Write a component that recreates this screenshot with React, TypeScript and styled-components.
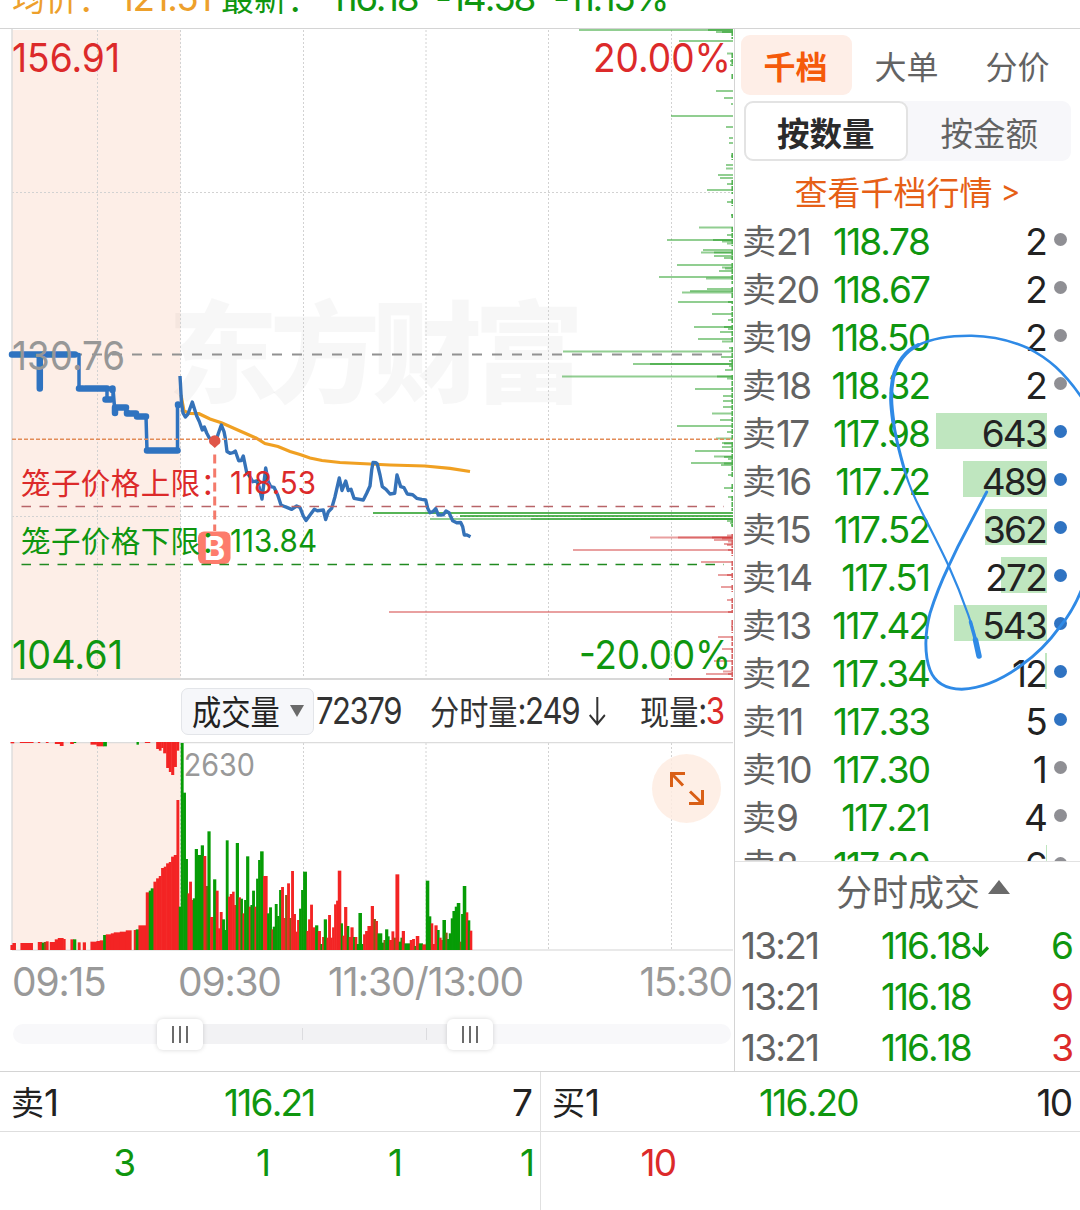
import React from "react";
import styled, { createGlobalStyle } from "styled-components";

const GREEN = "#0f960f";
const RED = "#dc2a2a";
const GREY = "#636363";
const FONT = '"Inter", "Noto Sans CJK SC", sans-serif';
const LINE = "#d4d4d4";

const GlobalStyle = createGlobalStyle`
  * { box-sizing: border-box; }
  body { margin: 0; background: #fff; }
`;

const Page = styled.div`
  position: relative;
  width: 1080px;
  height: 1210px;
  overflow: hidden;
  display: flex;
  flex-direction: column;
  background: #fff;
  font-family: ${FONT};
  color: #222;
  white-space: nowrap;
`;

const Num = styled.span<{ $color?: string; $size?: number; $track?: number }>`
  display: inline-block;
  font-family: ${FONT};
  font-size: ${(p) => p.$size ?? 37}px;
  font-kerning: none;
  line-height: 1.1;
  letter-spacing: ${(p) => p.$track ?? -1.8}px;
  margin-right: ${(p) => -(p.$track ?? -1.8)}px;
  color: ${(p) => p.$color ?? "inherit"};
`;

const Han = styled.span<{ $size?: number; $color?: string }>`
  font-family: "Noto Sans CJK SC", sans-serif;
  font-size: ${(p) => p.$size ?? 33}px;
  line-height: 1.1;
  color: ${(p) => p.$color ?? "inherit"};
`;

/* top summary */
const Summary = styled.header`
  flex: none;
  height: 29px;
  border-bottom: 1px solid ${LINE};
  overflow: hidden;
`;
const SummaryLine = styled.div`
  display: grid;
  grid-template-columns: 107px 102px 109px 105px 118px auto;
  align-items: baseline;
  padding-left: 12px;
  margin-top: -22px;
  height: 40px;
`;

const Main = styled.main`
  flex: none;
  height: 1042px;
  display: grid;
  grid-template-columns: 734px 346px;
`;
const Charts = styled.section`
  display: flex;
  flex-direction: column;
`;
const PriceSvg = styled.svg`
  display: block;
  flex: none;
  width: 734px;
  height: 652px;
`;
const VolumeHead = styled.div`
  flex: none;
  height: 61px;
  padding-left: 181px;
  display: grid;
  grid-template-columns: 135px 114px 210px 1fr;
  align-items: center;
  color: #333;
`;
const Picker = styled.button`
  width: 133px;
  height: 47px;
  padding: 0 9px 2px 10px;
  display: flex;
  align-items: center;
  justify-content: space-between;
  border: 1px solid #e3e5e9;
  border-radius: 7px;
  background: #f6f7fa;
  color: #222;
`;
const PickerText = styled.span`
  width: 88px;
  font: 34px/1.1 "Noto Sans CJK SC", sans-serif;
  transform: scaleX(0.86);
  transform-origin: left;
`;
const Caret = styled.i<{ $up?: boolean }>`
  width: 0;
  height: 0;
  border-left: ${(p) => (p.$up ? 11 : 7.5)}px solid transparent;
  border-right: ${(p) => (p.$up ? 11 : 7.5)}px solid transparent;
  ${(p) => (p.$up ? "border-bottom: 14px solid #6a6a6a; margin-bottom: 7px;" : "border-top: 12px solid #6a6a6a;")}
`;
const Squeezed = styled.span<{ $by: number }>`
  display: flex;
  align-items: center;
  width: 0;
  transform: scaleX(${(p) => p.$by});
  transform-origin: left;
  ${Num} { margin-right: 0; }
  ${Han} { margin-top: -2px; }
  svg { flex: none; margin-left: 12px; }
`;
const VolumeBox = styled.div`
  position: relative;
  flex: none;
  height: 209px;
`;
const VolumeSvg = styled.svg`
  display: block;
  width: 734px;
  height: 209px;
`;
const Expand = styled.button`
  position: absolute;
  left: 652px;
  top: 12px;
  width: 69px;
  height: 69px;
  padding: 0;
  border: 0;
  border-radius: 50%;
  background: rgba(254, 236, 226, 0.85);
  svg { display: block; }
`;
const TimeAxis = styled.div`
  flex: none;
  height: 61px;
  padding: 2px 1px 0 12px;
  display: grid;
  grid-template-columns: 166px 150px 1fr auto;
  align-items: center;
  color: #999;
`;
const Track = styled.div`
  flex: none;
  height: 20px;
  margin: 12px 3px 0 13px;
  display: flex;
  align-items: center;
  border-radius: 10px;
  background: #f8f8fa;
`;
const Outside = styled.span`
  width: 167px;
`;
const Selected = styled.span`
  width: 290px;
  height: 20px;
  display: flex;
  justify-content: space-between;
  align-items: center;
  padding: 0 43px 0 122px;
  background: #f2f2f4;
`;
const Tick = styled.i`
  width: 1px;
  height: 12px;
  background: #dcdcdf;
`;
const Handle = styled.span`
  flex: none;
  z-index: 1;
  width: 46px;
  height: 31px;
  margin: 0 -23px;
  display: flex;
  justify-content: center;
  align-items: center;
  gap: 5px;
  border-radius: 6px;
  background: #fff;
  box-shadow: 0 0 5px rgba(0, 0, 0, 0.16);
`;
const Grip = styled.i`
  width: 2px;
  height: 17px;
  background: #6b6b6b;
`;

/* order book column */
const Book = styled.aside`
  height: 1042px;
  overflow: hidden;
  border-left: 1px solid ${LINE};
  display: flex;
  flex-direction: column;
`;
const Tabs = styled.nav`
  flex: none;
  height: 66px;
  margin-top: 6px;
  padding-left: 6px;
  display: grid;
  grid-template-columns: 111px 111px 111px;
`;
const Tab = styled.button<{ $on?: boolean }>`
  height: 60px;
  padding: 0 2px 0 0;
  border: 0;
  border-radius: 9px;
  background: ${(p) => (p.$on ? "#feeee7" : "none")};
  color: ${(p) => (p.$on ? "#f55a0a" : GREY)};
  font: ${(p) => (p.$on ? 700 : 400)} 32px/1 "Noto Sans CJK SC", sans-serif;
`;
const Segments = styled.div`
  flex: none;
  height: 60px;
  margin: 0 9px 0 9px;
  display: grid;
  grid-template-columns: 1fr 1fr;
  border-radius: 9px;
  background: #f7f7fa;
`;
const Segment = styled.button<{ $on?: boolean }>`
  padding: 2px 0 0;
  border: ${(p) => (p.$on ? "2px solid #e3e3e3" : "2px solid transparent")};
  border-radius: 9px;
  background: ${(p) => (p.$on ? "#fff" : "none")};
  color: ${(p) => (p.$on ? "#2b2b2b" : GREY)};
  font: ${(p) => (p.$on ? 700 : 400)} 32.5px/1 "Noto Sans CJK SC", sans-serif;
`;
const MoreLink = styled.a`
  flex: none;
  height: 57px;
  padding: 3px 0 0 0;
  display: flex;
  justify-content: center;
  align-items: center;
  gap: 8px;
  color: #e65f16;
`;
const Levels = styled.div`
  flex: none;
  height: 644px;
  overflow: hidden;
  border-bottom: 1px solid #e2e2e2;
`;
const Level = styled.div`
  height: 48px;
  padding: 0 13px 0 7px;
  display: grid;
  grid-template-columns: 86px 103px 116px 1fr;
  align-items: center;
`;
const Name = styled.span<{ $color?: string }>`
  display: flex;
  align-items: center;
  color: ${(p) => p.$color ?? GREY};
  ${Han} { margin-top: -4px; }
`;
const Right = styled.span`
  text-align: right;
`;
const Qty = styled.span<{ $bar: number }>`
  height: 36px;
  margin-bottom: 6px;
  padding-top: 6px;
  display: flex;
  justify-content: flex-end;
  align-items: center;
  background: linear-gradient(#bfe6bf, #bfe6bf) right / ${(p) => p.$bar}px 100% no-repeat;
  ${Num} { margin-right: 1px; }
`;
const Dot = styled.i<{ $live?: boolean }>`
  width: 13px;
  height: 13px;
  margin: 0 0 5px 7px;
  border-radius: 50%;
  background: ${(p) => (p.$live ? "#2f73c2" : "#8f8f94")};
`;
const TradesTitle = styled.div`
  flex: none;
  height: 59px;
  display: flex;
  align-items: center;
  justify-content: center;
  gap: 8px;
  padding: 0 0 2px 31px;
  color: ${GREY};
`;
const Trade = styled.div`
  flex: none;
  height: 51px;
  padding: 0 6px 0 6px;
  display: grid;
  grid-template-columns: 140px 1fr auto;
  align-items: center;
`;
const Price = styled.span`
  display: flex;
  align-items: center;
  svg { margin: -3px 0 0 -1px; }
`;

/* best bid / ask */
const Bottom = styled.footer`
  flex: 1;
  display: grid;
  grid-template-columns: 540px 540px;
  border-top: 1px solid ${LINE};
`;
const Side = styled.section`
  & + & { border-left: 1px solid #e0e0e0; }
`;
const Best = styled.div<{ $mid: number }>`
  height: 60px;
  padding: 3px 7px 0 11px;
  display: grid;
  grid-template-columns: ${(p) => p.$mid}px 1fr auto;
  align-items: center;
  border-bottom: 1px solid #dedede;
`;
const Orders = styled.div<{ $color: string }>`
  height: 61px;
  padding-top: 2px;
  display: grid;
  grid-template-columns: 136px 135px 132px 132px;
  align-items: center;
  text-align: right;
  color: ${(p) => p.$color};
`;
const Ink = styled.svg`
  position: absolute;
  left: 0;
  top: 0;
  pointer-events: none;
`;

type Bar = [number, number, number, string];

const parse = (text: string, shift = 0): Bar[] =>
  text.trim().split(/\s+/).map((item) => {
    const [, c, a, b, t] = item.match(/([a-z])(\d+)-(\d+):(\d+)/)!;
    return [Number(a) + shift, Number(b) + shift, Number(t), c];
  });

const FILL: Record<string, string> = { r: "#f32424", g: "#069c06", b: "#8a5a14" };

/* thirds of a pixel: colour, left-right : top */
const volume: Bar[] = [
  ...parse(`r32-38:915 r38-47:909 r62-98:909 r114-126:906 g126-132:908 b132-138:906 r138-145:904 r150-165:906 r165-174:898 r174-190:894 r190-196:897
  r212-220:898 g220-228:898 r234-241:907 r249-257:907 r272-290:905 r290-300:903 r300-310:901 g310-318:885 r318-333:883 r333-342:880 r342-360:877
  r360-378:875 r378-394:871 r402-408:870 g408-416:868 r416-438:856 r438-447:757 g447-453:752 g453-461:745 r461-469:725 r469-477:715
  r477-484:708 r484-492:684 r492-499:680 r499-507:670 r507-514:666 r514-522:650 r522-530:645 r530-537:480 g537-543:800 g543-550:309
  g550-557:458 g557-563:657 r563-568:760 r568-575:725 r575-579:780 g579-585:775 g585-593:627 g593-603:645 g603-611:616 r611-618:648
  b618-623:738 g623-631:574 r631-640:831 g640-648:718 r648-655:752 r655-660:865 r660-667:816 g667-674:838 g674-678:870 g678-685:601
  r685-690:770 r690-697:762 r697-703:755 r703-708:795 g708-716:609 r716-722:772 g722-728:776 r728-733:820 g733-739:780 g739-747:649
  r747-752:800 g752-757:795 g757-764:752 r764-769:800 g769-775:716 g775-781:660 g781-790:634 r790-802:708 g802-808:820 g808-815:802
  r815-819:868 g819-825:860 g825-832:792 g832-838:828 g838-844:750 r844-851:741 r851-856:834 b856-862:765 r862-869:730 b869-874:834
  r874-881:693 r881-887:822 r887-892:875 r892-898:840 g898-904:806 g904-910:750 g910-920:695 r920-925:873 r925-931:838 r931-938:794
  r938-946:862 g946-954:856 r954-962:873 g962-967:912 r967-972:891 g972-980:838 r980-985:893 r985-992:825 r992-997:893 r997-1003:862
  r1003-1009:793 r1009-1014:782 r1014-1023:692 g1023-1028:850 r1028-1033:887 r1033-1041:801 g1041-1047:858 r1047-1052:891
  r1052-1060:862 g1060-1065:891 r1065-1071:891 g1071-1076:912 g1076-1085:819 g1085-1090:912 r1090-1096:883 r1096-1103:873 r1103-1110:858`),
  ...parse(`r0-3:858 r3-11:798 b11-17:837 r17-23:843 g23-36:880 g36-41:908 b41-46:900 g46-54:868 g54-58:889 r58-65:900 r65-72:874
  b72-77:893 r77-87:703 g87-92:905 g92-96:893 r96-104:873 g104-120:910 r120-127:900 r127-134:897 g134-138:918 r138-147:888
  g147-158:910 r158-168:913 g168-177:722 g177-183:829 r183-189:850 r189-194:912 r194-202:856 g202-208:870 r208-214:893
  r214-218:900 g218-227:840 b227-232:878 g232-237:897 g237-243:880 g243-248:835 g248-255:813 g255-261:800 g261-270:789
  b270-274:905 g274-279:822 g279-288:738 r288-294:817 g294-300:841 r300-306:872`, 1110),
];

/* unmatched auction volume, hanging from the upper edge */
const hanging: Bar[] = parse(`r32-42:310 r60-100:309 r114-120:309 r138-145:309 r165-180:312 r180-190:318 r211-221:312 g221-228:309 r272-290:314 r290-310:319 g310-320:319
  g410-416:314 r435-450:309 r469-477:327 r477-484:332 r484-490:324 r490-499:340 r499-507:384 r507-514:396 r514-522:405 r522-530:381 r530-537:332`);

const asks: [number, number][] = [
  [30, 579], [30, 708], [32, 716], [32, 722], [41, 679], [53.5, 727], [61, 730], [65, 730], [91, 716], [98, 724], [104, 731], [116, 671], [127, 726],
  [138, 729], [143, 729], [156, 731], [165, 726], [168.5, 726], [175, 718], [178, 720], [184, 727], [190, 707], [202, 727], [215, 731],
  [227.5, 699], [235, 727], [240, 667], [240, 713], [241.5, 722], [243.5, 727], [250, 703], [252.5, 701], [252.5, 714], [256, 714], [258, 724],
  [265, 677], [267.5, 722], [268.5, 725], [271, 719], [277, 659], [278.5, 706], [289, 707], [291, 690], [292.5, 682], [302, 678], [302, 728], [314, 712],
  [320, 728], [327, 694], [327, 724], [329, 728], [332, 720], [339, 698], [341.5, 722], [348, 729], [351.5, 563], [357, 721], [361, 729],
  [364, 633], [364, 650], [366, 729], [370, 725], [376.5, 562], [376.5, 717], [378.5, 727], [389, 695], [396, 723], [401, 723], [407, 723], [413.5, 712],
  [420, 720], [426, 677], [432, 727], [438.5, 716], [443, 722], [443.5, 724], [447, 722], [451, 695], [456.5, 714], [457, 724], [459, 728], [463, 691],
  [463.5, 724], [465, 721], [475, 728], [488, 724], [497, 728], [513, 373], [513, 373], [516, 460], [516, 460], [519, 430], [519, 531], [519, 581], [521, 727], [523, 730], [525, 731],
];
const bids: [number, number][] = [
  [535.5, 727], [537.5, 650], [537.5, 678], [537.5, 712], [538.5, 722], [540, 714], [541.5, 728], [544, 724], [545, 727], [550, 573], [550, 728], [562, 701], [575, 718],
  [575, 727], [587, 721], [600, 727], [612, 389], [612, 728], [626, 731], [637, 718], [649, 722], [661, 714], [671.5, 723], [674, 706],
  [674, 728], [679, 669], [679, 669],
];
const edges: [number, number, string][] = [
  [31, 39, "g"], [53, 66, "g"], [74, 79, "g"], [153, 160, "g"], [180, 194, "g"], [199, 206, "g"], [214, 218, "g"], [227, 246, "g"], [250, 260, "g"],
  [263, 284, "g"], [287, 298, "g"], [301, 304, "g"], [306, 323, "g"], [325, 343, "g"], [347, 371, "g"], [375, 392, "g"], [393, 440, "g"],
  [442, 477, "g"], [484, 492, "g"], [496, 511, "g"], [518, 527, "g"], [534, 548, "r"], [549, 556, "r"], [561, 570, "r"], [573, 580, "r"],
  [585, 592, "r"], [598, 613, "r"], [620, 633, "r"], [636, 646, "r"], [648, 680, "r"],
];

const priceLine =
  "180,376 181.5,403 183,413 185.3,417 188,414 192.3,402 196.7,416 199.3,421.5 202.3,430 204.3,427 206.7,433 209.3,438 215,440 217.3,436.5 221.3,425 224,431.7 225.3,438 227,451.5 230,453.3 233,452.7 235.3,451 238.7,460.7 241.3,460.5 243.3,456 246.7,472.5 250,476.7 252.7,481.7 256.7,481 259,486.7 262,499 265.7,468 268.3,481.7 270.7,486.7 274,487.3 277.7,495 281,505 285,506.7 291.7,509.3 296.7,506 300,507.5 303.3,516 306,520.5 311.7,512.7 314.3,509.3 317.3,510.7 323.3,510 325.7,519.5 328.3,511.7 331.7,508.3 335,496.7 339.3,478 342,490.5 345.7,481 348.3,490.5 351,489.3 354,498.3 363.3,500 366.7,493.3 370,486 371.7,470 373,462.5 376,462.7 377.3,464 380,475 382.3,486.7 386,489.3 390,494 394.7,493.3 397,475 400.7,486.7 404,487.7 407.3,494 412.7,494.7 416.7,498.3 421.7,499.3 425.7,500 427.7,508.3 430,512.7 433,511.7 435.7,508.5 438.3,515 443.3,514.7 446,511 449,512.7 452.7,520.7 456.7,522.7 460.7,522.5 462.7,526.7 464.3,535 467,535 470.5,536.7";
const averageLine =
  "181,395 184,411 190,413.5 199,413.7 210,419 222,423 240,431 256,438 265,443.5 278,446.5 290,451.5 300,454.5 310,458 322,460.5 340,462.5 370,464 390,465 425,466 450,468.3 470,471.5";

const gridX = [97.5, 180.5, 303.5, 426, 548.5, 671.5];

const levels: [number, string, number, number, boolean][] = [
  [21, "118.78", 2, 0, false], [20, "118.67", 2, 0, false], [19, "118.50", 2, 0, false], [18, "118.32", 2, 0, false],
  [17, "117.98", 643, 111, true], [16, "117.72", 489, 84, true], [15, "117.52", 362, 62, true], [14, "117.51", 272, 46, true],
  [13, "117.42", 543, 93, true], [12, "117.34", 12, 2, true], [11, "117.33", 5, 0, true], [10, "117.30", 1, 0, false],
  [9, "117.21", 4, 0, false], [8, "117.20", 6, 1, false],
];

const trades: [string, string, string, string, boolean][] = [
  ["13:21", "116.18", "6", GREEN, true],
  ["13:21", "116.18", "9", RED, false],
  ["13:21", "116.18", "3", RED, false],
];

function PriceChart() {
  const fit = { lengthAdjust: "spacingAndGlyphs" as const, fontFamily: FONT };
  return (
    <PriceSvg viewBox="0 29 734 652">
      <rect x="12" y="30" width="168.5" height="649" fill="#fdeee7" />
      <text x="168" y="394" fontFamily="Noto Sans CJK SC" fontWeight="900" fontSize="110" textLength="416" fill="#000" fillOpacity=".03">东方财富</text>
      <g stroke="#d2d2d2" strokeDasharray="2 2">
        {gridX.map((x) => <line key={x} x1={x} x2={x} y1="30" y2="679" />)}
        <line x1="12" x2="733" y1="192.5" y2="192.5" />
        <line x1="12" x2="733" y1="516.5" y2="516.5" />
      </g>
      <line x1="12" x2="12" y1="29" y2="680" stroke="#dcdcdc" strokeWidth="1.5" />
      <line x1="11" x2="733" y1="679" y2="679" stroke="#d8d8d8" strokeWidth="2" />
      <line x1="12" x2="722" y1="354.5" y2="354.5" stroke="#929292" strokeWidth="2" strokeDasharray="10 10" />
      <g stroke="#1a991a" strokeOpacity=".48" strokeWidth="2">
        {asks.map(([y, x], i) => <line key={i} x1={x} x2="733" y1={y} y2={y} />)}
      </g>
      <g stroke="#cc2222" strokeOpacity=".43" strokeWidth="2">
        {bids.map(([y, x], i) => <line key={i} x1={x} x2="733" y1={y} y2={y} />)}
      </g>
      <g strokeWidth="1.5" strokeDasharray="5 1">
        {edges.map(([a, b, c], i) => <line key={i} x1="732.2" x2="732.2" y1={a} y2={b} stroke={c === "g" ? "#4aae4a" : "#d65c5c"} />)}
      </g>
      <g fill="none" stroke="#2f73c0" strokeLinecap="round" strokeLinejoin="round">
        <path d="M12 354.5H75M39.8 355V388.5M79 388.5H83M85 388.5H107M105.5 399.5H111M112.5 388.5V390M115 413V407.5H126M127 412.5V413.5H136M137 416.5H146M147 450.5H177.5M178 405V404.5" strokeWidth="6.5" />
        <path d="M75 354.5H79V388.5M107 388.5V399.5H113V388.5L115 413M146 416.5L147 450.5M177.5 450V405H180" strokeWidth="3.5" />
      </g>
      <polyline points={averageLine} fill="none" stroke="#f0a022" strokeWidth="3.2" />
      <polyline points={priceLine} fill="none" stroke="#3572b8" strokeWidth="3.4" strokeLinejoin="round" />
      <line x1="12" x2="733" y1="439.3" y2="439.3" stroke="#e28c58" strokeWidth="1.4" strokeDasharray="4 2" />
      <text x="12" y="72" fontSize="39.5" textLength="108" fill={RED} {...fit}>156.91</text>
      <text x="593" y="72" fontSize="39.5" textLength="138" fill={RED} {...fit}>20.00%</text>
      <text x="12" y="370" fontSize="39.5" textLength="113" fill="#979797" {...fit}>130.76</text>
      <text x="12" y="669" fontSize="39.5" textLength="111" fill={GREEN} {...fit}>104.61</text>
      <text x="579" y="669" fontSize="39.5" textLength="152" fill={GREEN} {...fit}>-20.00%</text>
      <line x1="214.7" x2="214.7" y1="454.5" y2="531" stroke="#f47a6b" strokeWidth="3" strokeDasharray="9 5" />
      <path d="M209 441a5.7 5.7 0 0 1 11.5 0c0 2-1 3-2.5 4l-3.2 3-3.3-3c-1.5-1-2.5-2-2.5-4z" fill="#e05548" />
      <rect x="198" y="531.5" width="32.5" height="32.5" rx="6" fill="#fd7c6c" />
      <text x="214.5" y="559.5" textAnchor="middle" fontFamily={FONT} fontWeight="700" fontSize="32" fill="#fff">B</text>
      <g fontFamily="Noto Sans CJK SC" fontSize="29.5">
        <text x="21" y="494" textLength="209" fill={RED}>笼子价格上限：</text>
        <text x="21" y="552" textLength="209" fill={GREEN}>笼子价格下限：</text>
      </g>
      <text x="230" y="494" fontSize="31" textLength="86" fill={RED} {...fit}>118.53</text>
      <text x="230" y="552" fontSize="31" textLength="87" fill={GREEN} {...fit}>113.84</text>
      <line x1="21.5" x2="724" y1="506.5" y2="506.5" stroke="#b86468" strokeWidth="1.3" strokeDasharray="9.5 8.5" />
      <line x1="21.5" x2="724" y1="564.5" y2="564.5" stroke="#218a21" strokeWidth="1.3" strokeDasharray="9.5 8.5" />
    </PriceSvg>
  );
}

function VolumeChart() {
  return (
    <VolumeBox>
      <VolumeSvg viewBox="0 306 2202 627">
        <rect x="36" y="308" width="506" height="620" fill="#fdeee7" />
        <g stroke="#d2d2d2" strokeWidth="3" strokeDasharray="6 6">
          {gridX.map((x) => <line key={x} x1={x * 3} x2={x * 3} y1="309" y2="928" />)}
        </g>
        <path d="M36 308H2199M36 306V930" stroke="#dcdcdc" strokeWidth="4" fill="none" />
        <path d="M36 930H2199" stroke="#e2e2e2" strokeWidth="5" />
        {volume.map(([a, b, t, c], i) => <rect key={i} x={a - 0.7} y={t} width={b - a + 1.6} height={930 - t} fill={FILL[c]} />)}
        {hanging.map(([a, b, t, c], i) => <rect key={i} x={a - 0.5} y="306" width={b - a + 1.2} height={t - 306} fill={FILL[c]} />)}
        <text x="551" y="407" fontFamily={FONT} fontSize="92" textLength="214" lengthAdjust="spacingAndGlyphs" fill="#999">2630</text>
      </VolumeSvg>
      <Expand aria-label="expand">
        <svg width="69" height="69" viewBox="0 0 69 69" fill="none" stroke="#d95f16" strokeWidth="3">
          <path d="M19.5 33V19.5H33M20 20L31 31.5M50.5 36V49.5H37M50 49L38 37.5" />
        </svg>
      </Expand>
    </VolumeBox>
  );
}

const DownArrow = ({ w, h, color, sw }: { w: number; h: number; color: string; sw: number }) => (
  <svg width={w} height={h} viewBox={`0 0 ${w} ${h}`} fill="none" stroke={color} strokeWidth={sw}>
    <path d={`M${w / 2} 0V${h - 2}M1 ${h - w / 2 - 1}L${w / 2} ${h - 2}L${w - 1} ${h - w / 2 - 1}`} />
  </svg>
);

export default function App() {
  return (
    <Page>
      <GlobalStyle />
      <Summary>
        <SummaryLine>
          <Han $color="#eda02b">均价：</Han>
          <Num $color="#eda02b" $track={-1.5}>121.51</Num>
          <Han $color={GREEN}>最新：</Han>
          <Num $color={GREEN} $track={-2.4}>116.18</Num>
          <Num $color={GREEN} $track={-2.1}>-14.58</Num>
          <Num $color={GREEN} $track={-2.5}>-11.15%</Num>
        </SummaryLine>
      </Summary>
      <Main>
        <Charts>
          <PriceChart />
          <VolumeHead>
            <Picker><PickerText>成交量</PickerText><Caret /></Picker>
            <Squeezed $by={0.84}><Num>72379</Num></Squeezed>
            <Squeezed $by={0.845}>
              <Han $size={34.5}>分时量</Han><Num>:249</Num>
              <DownArrow w={20} h={29} color="#333" sw={2.4} />
            </Squeezed>
            <Squeezed $by={0.845}><Han $size={34.5}>现量</Han><Num>:</Num><Num $color={RED}>3</Num></Squeezed>
          </VolumeHead>
          <VolumeChart />
          <TimeAxis>
            <Num $size={39} $track={-1.2}>09:15</Num>
            <Num $size={39} $track={-1.2}>09:30</Num>
            <Num $size={39} $track={-1}>11:30/13:00</Num>
            <Num $size={39} $track={-1.5}>15:30</Num>
          </TimeAxis>
          <Track>
            <Outside />
            <Handle><Grip /><Grip /><Grip /></Handle>
            <Selected><Tick /><Tick /></Selected>
            <Handle><Grip /><Grip /><Grip /></Handle>
          </Track>
        </Charts>
        <Book>
          <Tabs>
            <Tab $on>千档</Tab>
            <Tab>大单</Tab>
            <Tab>分价</Tab>
          </Tabs>
          <Segments>
            <Segment $on>按数量</Segment>
            <Segment>按金额</Segment>
          </Segments>
          <MoreLink><Han $size={33}>查看千档行情</Han><Num $size={30}>&gt;</Num></MoreLink>
          <Levels>
            {levels.map(([n, price, qty, bar, live]) => (
              <Level key={n}>
                <Name><Han $size={34}>卖</Han><Num>{n}</Num></Name>
                <Right><Num $color={GREEN} $track={-1.9}>{price}</Num></Right>
                <Qty $bar={bar}><Num>{qty}</Num></Qty>
                <Dot $live={live} />
              </Level>
            ))}
          </Levels>
          <TradesTitle><Han $size={36}>分时成交</Han><Caret $up /></TradesTitle>
          {trades.map(([time, price, qty, color, down], i) => (
            <Trade key={i}>
              <Num $color={GREY}>{time}</Num>
              <Price><Num $color={GREEN} $track={-2}>{price}</Num>{down && <DownArrow w={17} h={24} color={GREEN} sw={3.2} />}</Price>
              <Num $color={color}>{qty}</Num>
            </Trade>
          ))}
        </Book>
      </Main>
      <Bottom>
        <Side>
          <Best $mid={213}>
            <Name $color="#222"><Han>卖</Han><Num>1</Num></Name>
            <Num $color={GREEN}>116.21</Num>
            <Num>7</Num>
          </Best>
          <Orders $color={GREEN}><Num>3</Num><Num>1</Num><Num>1</Num><Num>1</Num></Orders>
          <Orders $color={GREEN}><Num>4</Num></Orders>
        </Side>
        <Side>
          <Best $mid={207}>
            <Name $color="#222"><Han>买</Han><Num>1</Num></Name>
            <Num $color={GREEN}>116.20</Num>
            <Num>10</Num>
          </Best>
          <Orders $color={RED}><Num>10</Num></Orders>
        </Side>
      </Bottom>
      <Ink width="1080" height="1210" viewBox="0 0 1080 1210" fill="none" stroke="#2f8ae6" strokeLinecap="round" strokeLinejoin="round">
        <path d="M978.5 656C976 640 973 628 968.3 615C962 597 956 582 948.7 566C940 547 931 530 921.7 511.7C914 497 909 485 905 471.7" strokeWidth="2.2" />
        <path d="M979 656L975.5 640" strokeWidth="5.5" />
        <path d="M975.5 640L970.5 622" strokeWidth="3.5" />
        <path d="M905 471.7C899 451 895 436 893.3 420" strokeWidth="3" />
        <path d="M893.3 422C891 405 890 394 893 378C897 362 905 351 918.3 345" strokeWidth="4" />
        <path d="M918.3 345C935 337 953 335.5 971.7 335.7C992 336 1010 340 1028.3 348.3C1048 358 1064 372 1082 398" strokeWidth="2.6" />
        <path d="M1083 586C1075 607 1068 617 1060 626.7C1049 642 1036 655 1021.7 665C1003 679 984 688 961.7 689.3C946 689 935 683 930 670C924 654 925 632 930 613.3C936 594 942 580 948.7 566C955 552 961 540 968.3 526.7L986.7 492" strokeWidth="2.9" />
      </Ink>
    </Page>
  );
}
